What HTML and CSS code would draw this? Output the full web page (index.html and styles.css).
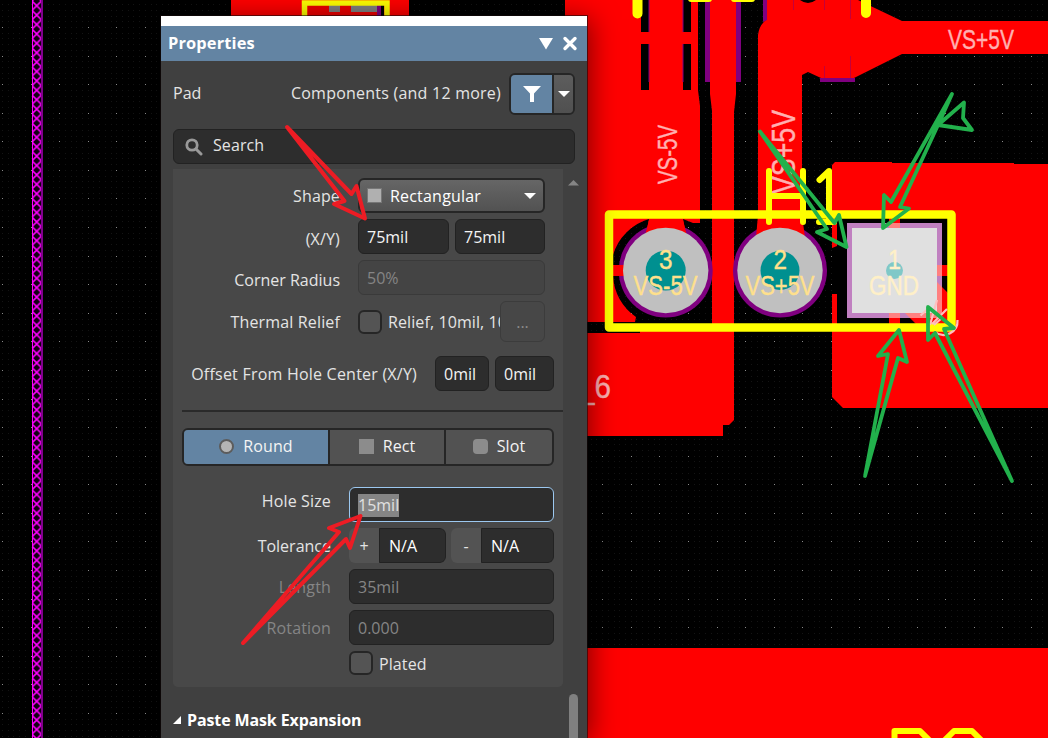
FILE: index.html
```html
<!DOCTYPE html>
<html lang="en">
<head>
<meta charset="utf-8">
<title>Pad Properties</title>
<link rel="stylesheet" href="styles.css">
</head>
<body>
<main class="workspace">
<svg class="board" viewBox="0 0 1048 738" width="1048" height="738">
  <defs>
    <pattern id="hatch" x="32" y="1" width="9.4" height="9.4" patternUnits="userSpaceOnUse"><path d="M0 0L9.4 9.4M9.4 0L0 9.4" stroke="#f0f" stroke-width="1.5"/></pattern>
  </defs>
  <rect width="1048" height="738" fill="#000"/>
  <path id="minor" fill="#141414"/>
  <path id="major" fill="#8a8a8a"/>

  <!-- keep-out strip -->
  <rect x="32" width="11" height="738" fill="#100010"/>
  <rect x="32" width="10" height="738" fill="url(#hatch)"/>
  <rect x="32" width="1" height="738" fill="#f0f"/>
  <rect x="41" width="2" height="738" fill="#80008c"/>

  <!-- copper -->
  <g fill="#f00">
    <rect x="231" width="178" height="16"/>
    <path d="M565 0H698V90L700 106V223H693L683 219L687 240H645L649 219A53 53 0 0 0 613 255V265H626V276H613A53 53 0 0 0 636 317L635 322H565Z"/>
    <path d="M710 0H736V94L734 112V420L729 425H723V436H565V333H640V331H712V111L710 94Z"/>
    <path d="M767 0H800Q808 6 816 0H858L902 21H1048V54H902L854 78H821L808 72L802 75V223L805 240H755L758 223V35Q759 25 767 19Z"/>
    <path d="M832 165L835 162H892V163H1014V164H1048V408H843L832 397Z"/>
    <rect x="587" y="648" width="461" height="90"/>
  </g>
  <g fill="#000">
    <path d="M641 0H649V32H641ZM683 0H691V32H683ZM641 44H649V90H641ZM683 44H691V90H683Z"/>
    <path d="M837 218H948V265H937V276H948V293L937 282V313H905L917 325H837V294H832V248L837 246Z"/>
  </g>
  <path d="M889 217H900V225H889ZM889 312H900V326H889Z" fill="#f00"/>
  <g fill="#800080">
    <path d="M705 0H710V82H705ZM736 0H741V82H736ZM763 0H767V20L763 22ZM820 78H855V82H820Z"/>
    <path d="M648.500 0H649.500V32H648.500ZM682.500 0H683.500V32H682.500ZM648.500 44H649.500V82H648.500ZM682.500 44H683.500V82H682.500Z"/>
    <path d="M824 0H825V10H824ZM850 0H851V19H850ZM850 56H851V78H850ZM824 66H825V78H824ZM793 0H794V10H793Z" opacity=".45"/>
  </g>

  <!-- component behind the panel edge -->
  <path d="M308 5H377V16H308Z" fill="#e00"/>
  <path d="M329 5H340V12H329ZM351 5H377V12H351Z" fill="#808080"/>
  <path d="M377 4H381V16H377Z" fill="#800080"/><path d="M381 4H384V16H381Z"/>
  <path d="M304.500 18V3H387V18" fill="none" stroke="#ff0" stroke-width="5.500"/>

  <!-- round pads -->
  <g>
    <circle cx="665.700" cy="270.500" r="47" fill="#800080"/>
    <path d="M649 220L645 236H687L683 220Z" fill="#f00"/>
    <path d="M613 265H626V276H613Z" fill="#f00"/>
    <circle cx="665.700" cy="270.500" r="42.700" fill="#c0c0c0"/>
    <circle cx="665.700" cy="270.500" r="20" fill="#009090"/>
    <circle cx="780" cy="270.500" r="47" fill="#800080"/>
    <path d="M758 215L756 238H805L802 215Z" fill="#f00"/>
    <circle cx="780" cy="270.500" r="42.700" fill="#c0c0c0"/>
    <circle cx="780" cy="270.500" r="19.500" fill="#009090"/>
  </g>

  <!-- selected square pad -->
  <rect x="847" y="223" width="95" height="95" fill="#c080c0"/>
  <path d="M889 223H900V228H889ZM937 265H942V276H937ZM889 313H900V318H889ZM905 313H937V282L942 287V318H910Z" fill="#ff8080"/>
  <rect x="852" y="228" width="85" height="85" fill="#e0e0e0"/>
  <circle cx="894.500" cy="270.500" r="8.500" fill="#80c8c8"/>

  <!-- copper net names -->
  <g class="net" fill="#ffb0b0" stroke="#ffb0b0" stroke-width=".4">
    <text transform="translate(677 184) rotate(-90)" font-size="27" textLength="59" lengthAdjust="spacingAndGlyphs">VS-5V</text>
    <text transform="translate(794.500 194) rotate(-90)" font-size="34" textLength="84" lengthAdjust="spacingAndGlyphs">VS+5V</text>
    <text x="948" y="49" font-size="27" textLength="66" lengthAdjust="spacingAndGlyphs">VS+5V</text>
    <text x="578" y="398" font-size="34" textLength="33" lengthAdjust="spacingAndGlyphs">_6</text>
  </g>

  <!-- silkscreen -->
  <g fill="none" stroke="#ff0" stroke-linecap="round" stroke-linejoin="round">
    <rect x="609" y="214.500" width="342.500" height="113" stroke-width="8.500"/>
    <path d="M769 171V222M803 171V222M769 196H803M829 222V171L819.500 180M819 222H834" stroke-width="6"/>
    <path d="M637.500-5V13.500M866 -5V13" stroke-width="10"/>
    <path d="M691-1H709M734-1H752" stroke-width="6"/>
    <path d="M894.500 742V731H920L931 742M943 742L954 731H972L983 742" stroke-width="6"/>
  </g>

  <!-- pin numbers and nets -->
  <g class="net" fill="#ffe08c" stroke="#ffe08c" stroke-width=".4" font-size="28">
    <text x="659" y="269" textLength="13.500" lengthAdjust="spacingAndGlyphs">3</text>
    <text x="633.500" y="295" textLength="64" lengthAdjust="spacingAndGlyphs">VS-5V</text>
    <text x="773.500" y="269" textLength="13.500" lengthAdjust="spacingAndGlyphs">2</text>
    <text x="745.500" y="295" textLength="69" lengthAdjust="spacingAndGlyphs">VS+5V</text>
    <g fill="#fff0c8" stroke="#fff0c8">
      <text x="888" y="269" textLength="13" lengthAdjust="spacingAndGlyphs">1</text>
      <text x="869" y="295" textLength="50" lengthAdjust="spacingAndGlyphs">GND</text>
    </g>
  </g>
  <path d="M920.500 315.500L929 308M930 325L937 300M932 324L947 309M934 325L943 317M957.500 320A14 14 0 0 1 935 332" fill="none" stroke="#ffc0c0" stroke-width="2.200"/>
</svg>

<section class="panel">
  <div class="strip"></div>
  <header class="titlebar">
    <h1 class="title">Properties</h1>
    <svg width="40" height="20" viewBox="0 0 40 20"><path d="M1 4H15L8 15.500Z" fill="#fff"/><path d="M27 4.500L37 14.500M37 4.500L27 14.500" stroke="#fff" stroke-width="3.400" stroke-linecap="round"/></svg>
  </header>
  <div class="objectbar">
    <span>Pad</span>
    <span class="scope">Components (and 12 more)</span>
    <div class="filter">
      <button class="funnel"><svg width="18" height="16" viewBox="0 0 18 16"><path d="M0 0H18L11 7.500V16H7V7.500Z" fill="#fff"/></svg></button>
      <button class="drop"><svg width="12" height="6" viewBox="0 0 12 6"><path d="M0 0H12L6 6Z" fill="#fff"/></svg></button>
    </div>
  </div>
  <div class="search">
    <svg width="18" height="18" viewBox="0 0 18 18" fill="none" stroke="#999"><circle cx="7" cy="7" r="5.200" stroke-width="2.800"/><path d="M11 11L16 16" stroke-width="3" stroke-linecap="round"/></svg>
    <span>Search</span>
  </div>
  <div class="scroller">
    <div class="group">
      <div class="row">
        <label class="name">Shape</label>
        <div class="select"><i class="square"></i><span>Rectangular</span><svg width="12" height="6" viewBox="0 0 12 6"><path d="M0 0H12L6 6Z" fill="#fff"/></svg></div>
      </div>
      <div class="row">
        <label class="name low">(X/Y)</label>
        <div class="field x">75mil</div><div class="field y">75mil</div>
      </div>
      <div class="row">
        <label class="name low tight">Corner Radius</label>
        <div class="field faded">50%</div>
      </div>
      <div class="row tall">
        <label class="name">Thermal Relief</label>
        <i class="check"></i><span class="relief">Relief, 10mil, 10mil</span><button class="more">...</button>
      </div>
      <div class="row offset">
        <label class="name wide">Offset From Hole Center (X/Y)</label>
        <div class="field ox">0mil</div><div class="field oy">0mil</div>
      </div>
      <hr class="rule">
      <div class="tabs">
        <div class="tab active"><i class="round"></i>Round</div>
        <div class="tab rect"><i class="flat"></i>Rect</div>
        <div class="tab slot"><i class="flat soft"></i>Slot</div>
      </div>
      <div class="row hole">
        <label class="name short high">Hole Size</label>
        <div class="field focus"><mark>15mil</mark></div>
      </div>
      <div class="row">
        <label class="name short tight">Tolerance</label>
        <div class="tolerance plus"><b class="sign">+</b><span>N/A</span></div>
        <div class="tolerance minus"><b class="sign">-</b><span>N/A</span></div>
      </div>
      <div class="row">
        <label class="name short dim">Length</label>
        <div class="field long dim">35mil</div>
      </div>
      <div class="row">
        <label class="name short dim">Rotation</label>
        <div class="field long dim">0.000</div>
      </div>
      <div class="row plated">
        <label class="name short"></label>
        <i class="check"></i><span class="caption">Plated</span>
      </div>
    </div>
    <div class="track">
      <svg width="11" height="6" viewBox="0 0 11 6"><path d="M0 5.500H11L5.500 0Z" fill="#858585"/></svg>
      <i class="thumb"></i>
    </div>
  </div>
  <h2 class="section"><svg width="8" height="8" viewBox="0 0 8 8"><path d="M8 0V8H0Z" fill="#fff"/></svg><span>Paste Mask Expansion</span></h2>
</section>

<svg class="notes" viewBox="0 0 1048 738" width="1048" height="738" fill="none" stroke-linecap="round" stroke-linejoin="round">
  <g stroke="#ed1c24" stroke-width="4">
    <path d="M287 127L351.500 194L356.500 186L365 218.500L334 204L344.500 201Z"/>
    <path d="M243 643L339 532L329 528L360.500 516L350 548L346 539Z"/>
  </g>
  <g stroke="#22b14c" stroke-width="3.800">
    <path d="M952 94L891 202L884 195L883 228L909 208.500L900 207L938 125L964 102.500L963 118L972 130L938 125Z"/>
    <path d="M760 131.500L834.500 223L839 215L846.500 247L817 232L827 229Z"/>
    <path d="M865 476L888 354L878 356L899 330L907 362L898 358Z"/>
    <path d="M1012 481L935 333L928 340V307L954 328L944 329Z"/>
  </g>
</svg>
</main>
<script src="grid.js"></script>
</body>
</html>
```

FILE: styles.css
```css
* { box-sizing: border-box; }
body { margin: 0; background: #000; font-family: "Open Sans", "Noto Sans", sans-serif; font-size: 16px; line-height: 22px; color: #e4e4e4; overflow: hidden; }
button { padding: 0; font: inherit; color: inherit; border: 0; }
i, b { font-style: normal; font-weight: 400; flex: none; }
.workspace { position: relative; width: 1048px; height: 738px; overflow: hidden; }
.board, .notes { position: absolute; inset: 0; display: block; }
.notes { pointer-events: none; }
.net { font-family: "Liberation Sans Narrow", "Liberation Sans", Arial, sans-serif; }

.panel { position: absolute; left: 161px; top: 16px; width: 426px; height: 722px; background: #404040; box-shadow: 0 0 0 1px rgba(20,10,10,.6), 3px 3px 26px rgba(0,0,0,.5); display: flex; flex-direction: column; white-space: nowrap; }
.strip { height: 10px; background: #fff; flex: none; }
.titlebar { height: 35px; flex: none; background: #6384a3; display: flex; align-items: center; justify-content: space-between; padding: 0 9px 0 7px; }
.title { margin: 0; padding-bottom: 1px; font-size: 16.4px; font-weight: 700; color: #fff; letter-spacing: .15px; }
.objectbar { height: 42px; margin: 12px 12px 0; flex: none; display: flex; align-items: center; }
.objectbar > span { padding-bottom: 3px; }
.scope { margin-left: auto; margin-right: 8px; letter-spacing: .23px; }
.filter { width: 66px; height: 42px; display: flex; border: 2px solid #262626; border-radius: 6px; overflow: hidden; }
.funnel { width: 41px; background: #6384a3; display: grid; place-items: center; }
.drop { flex: 1; background: linear-gradient(#5d5d5d, #505050); border-left: 2px solid #262626; display: grid; place-items: center; }
.search { height: 35px; margin: 14px 12px 0; flex: none; display: flex; align-items: center; gap: 10px; padding: 0 11px 3px; background: #2d2d2d; border: 1px solid #222; border-radius: 6px; letter-spacing: .1px; }
.search svg { margin-top: 4px; }

.scroller { display: flex; height: 518px; margin: 5px 0 0 12px; flex: none; }
.group { width: 390px; background: #484848; border-radius: 0 0 5px 5px; padding-top: 9px; display: flex; flex-direction: column; gap: 6px; }
.row { display: flex; height: 35px; flex: none; align-items: center; }
.name { width: 167px; margin-right: 18px; text-align: right; flex: none; letter-spacing: .15px; }
.name.tight { letter-spacing: 0; }
.name.low { padding-top: 5px; }
.name.short { width: 158px; }
.name.high { padding-bottom: 7px; }
.name.wide { width: 244px; letter-spacing: .22px; }
.field { height: 35px; width: 187px; padding: 6px 8px; background: #2d2d2d; border: 1px solid #222; border-radius: 6px; color: #f4f4f4; }
.field.x { width: 91px; margin-right: 6px; }
.field.y { width: 90px; }
.field.ox { width: 54px; margin-right: 6px; }
.field.oy { width: 59px; }
.field.faded { background: #444; border-color: #3a3a3a; color: #858585; }
.field.long, .field.focus { width: 205px; }
.field.focus { border: 1.500px solid #9cc8f0; }
.field.focus mark { display: inline-block; height: 23px; background: #858585; color: #e0e0e0; }
.dim, .field.dim { color: #858585; }
.select { width: 187px; height: 35px; display: flex; align-items: center; padding: 0 7px 0 7px; border: 2px solid #262626; border-radius: 6px; background: linear-gradient(#666, #525252); color: #fff; letter-spacing: .2px; }
.select span { flex: 1; margin-left: 8px; }
.square { width: 15px; height: 15px; background: #b0b0b0; border: 1px solid #777; }
.row.tall { height: 41px; }
.check { width: 24px; height: 24px; border: 2px solid #262626; border-radius: 6px; background: #545454; }
.relief { width: 112px; margin-left: 6px; overflow: hidden; letter-spacing: .1px; }
.more { width: 45px; height: 41px; border: 1px solid #3c3c3c; border-radius: 6px; background: #474747; color: #8c8c8c; }
.row.offset { margin-top: 8px; }
.rule { margin: 13px 0 0 9px; height: 2px; border: 0; background: #2a2a2a; flex: none; }
.tabs { margin: 10px 9px 0; height: 38px; flex: none; display: flex; border: 2px solid #262626; border-radius: 6px; background: #525252; color: #f4f4f4; overflow: hidden; }
.tab { display: flex; align-items: center; justify-content: center; gap: 9px; padding-bottom: 2px; letter-spacing: .1px; }
.tab.active { width: 144px; background: #6384a3; }
.tab.rect { width: 116px; border-left: 2px solid #262626; }
.tab.slot { flex: 1; border-left: 2px solid #262626; }
.round { width: 15px; height: 15px; border-radius: 50%; background: #b4b4b4; border: 2px solid #5c5c5c; }
.flat { width: 15px; height: 15px; background: #8c8c8c; }
.soft { border-radius: 4px; }
.row.hole { margin-top: 15px; }
.tolerance { display: flex; height: 35px; border-radius: 6px; overflow: hidden; }
.tolerance.plus { width: 97px; margin-right: 5px; }
.tolerance.minus { width: 103px; }
.sign { width: 30px; background: #535353; text-align: center; padding-top: 7px; }
.tolerance span { flex: 1; background: #2d2d2d; border: 1px solid #222; border-radius: 0 6px 6px 0; padding: 6px 9px; color: #fff; }
.row.plated { height: 24px; }
.caption { margin-left: 6px; padding-top: 1px; letter-spacing: .1px; }
.track { width: 24px; display: flex; flex-direction: column; align-items: center; padding-top: 11px; padding-right: 3px; }
.thumb { width: 9px; height: 60px; margin-top: 508px; border-radius: 5px 5px 0 0; background: #808080; }
.track svg { flex: none; }
.section { margin: 22px 0 0 12px; display: flex; align-items: center; gap: 6px; font-size: 16px; font-weight: 700; color: #fff; letter-spacing: -.12px; }
```

FILE: grid.js
```js
// Snap grid: one-pixel dots, with every fifth dot brighter.
function dots(id, pitch) {
  let d = "";
  for (let y = 27 - Math.floor(27 / pitch) * pitch; y < 738; y += pitch)
    for (let x = 2; x < 1048; x += pitch)
      d += `M${Math.round(x)} ${Math.round(y)}h1v1h-1z`;
  document.getElementById(id).setAttribute("d", d);
}
dots("minor", 28.58 / 5);
dots("major", 28.58);
```
